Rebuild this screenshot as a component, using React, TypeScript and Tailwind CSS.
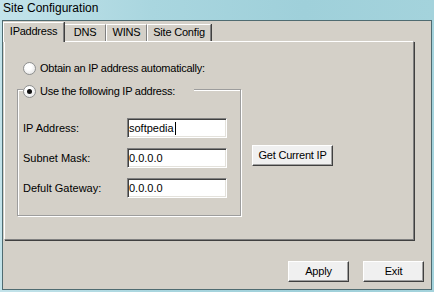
const face = "font-['Liberation_Sans',Arial,sans-serif]"

type Tab = { label: string; width: string; active?: boolean }

const tabs: Tab[] = [
  { label: "IPaddress", width: "w-[61px]", active: true },
  { label: "DNS", width: "w-[42px]" },
  { label: "WINS", width: "w-[41px]" },
  { label: "Site Config", width: "w-[64px]" },
]

function Radio({ checked }: { checked?: boolean }) {
  return (
    <span className="flex h-[13px] w-[13px] shrink-0 items-center justify-center rounded-full border border-[#8e8f8f] bg-[radial-gradient(circle_at_40%_35%,#ffffff_30%,#dcdcdc)]">
      {checked && <span className="h-[5px] w-[5px] rounded-full bg-[#111]" />}
    </span>
  )
}

function Button({ label, width }: { label: string; width: string }) {
  return (
    <button
      type="button"
      className={`${width} h-[21px] border border-t-white border-l-white border-r-[#404040] border-b-[#404040] bg-[#f0f0f0] text-[11px] leading-[13px] tracking-[-0.2px] text-black shadow-[inset_-1px_-1px_0_#a0a0a0]`}
    >
      {label}
    </button>
  )
}

function Field({ value, caret }: { value: string; caret?: boolean }) {
  return (
    <div className="flex h-[20px] w-[100px] items-center border border-t-[#808080] border-l-[#808080] border-r-white border-b-white bg-white pl-[1px] text-[11px] leading-[13px] text-black shadow-[inset_1px_1px_0_#404040,inset_-1px_-1px_0_#e4e2dc]">
      <span>{value}</span>
      {caret && <span className="ml-[1px] h-[13px] w-px bg-black" />}
    </div>
  )
}

export default function App() {
  const rows = [
    { label: "IP Address:", value: "softpedia", caret: true },
    { label: "Subnet Mask:", value: "0.0.0.0" },
    { label: "Defult Gateway:", value: "0.0.0.0" },
  ]

  return (
    <div className={`${face} h-[292px] w-[434px] overflow-hidden bg-[linear-gradient(90deg,#c3e3ea_0%,#a9d6df_35%,#9fd0da_70%,#a4d3dc_100%)] text-black`}>
      <div className="h-[20px] pl-[3px] text-[12px] leading-[16px] text-black">Site Configuration</div>

      <div className="mx-[2px] h-[270px] border border-[#4f6b71] bg-[#d4d0c8]">
        {/* tab strip */}
        <div className="mt-[1px] flex h-[19px] items-end">
          {tabs.map((tab) =>
            tab.active ? (
              <div
                key={tab.label}
                className={`${tab.width} relative z-10 -mb-px flex h-[20px] justify-center border-t border-l border-r border-t-white border-l-white border-r-[#808080] bg-[#d4d0c8] pt-[2px] text-[11px] leading-[13px] tracking-[-0.25px] shadow-[1px_0_0_#404040]`}
              >
                {tab.label}
              </div>
            ) : (
              <div
                key={tab.label}
                className={`${tab.width} flex h-[17px] justify-center border-t border-l border-r border-t-white border-l-white border-r-[#808080] pt-[1px] text-[11px] leading-[13px] tracking-[-0.2px] shadow-[1px_0_0_#404040]`}
              >
                {tab.label}
              </div>
            ),
          )}
        </div>

        {/* tab page */}
        <div className="ml-[1px] h-[199px] w-[410px] border border-t-white border-l-white border-r-[#808080] border-b-[#808080] shadow-[1px_1px_0_#404040]">
          <div className="pl-[12px] pt-[20px]">
            <div className="ml-[6px] flex h-[13px] items-center gap-[4px] text-[11px] leading-[13px] tracking-[-0.25px]">
              <Radio />
              <span>Obtain an IP address automatically:</span>
            </div>

            <div className="mt-[14px] flex items-start">
              <div className="h-[127px] w-[224px] border border-[#9d9d9d] shadow-[inset_1px_1px_0_#ffffff,1px_1px_0_#ffffff]">
                <div className="-mt-[5px] ml-[5px] flex h-[13px] w-fit items-center gap-[4px] bg-[#d4d0c8] pr-[19px] text-[11px] leading-[13px] tracking-[-0.25px]">
                  <Radio checked />
                  <span>Use the following IP address:</span>
                </div>

                <div className="ml-[5px] mt-[20px] grid grid-cols-[104px_100px] items-center gap-y-[10px] text-[11px] leading-[13px]">
                  {rows.map((row) => (
                    <div key={row.label} className="contents">
                      <span>{row.label}</span>
                      <Field value={row.value} caret={row.caret} />
                    </div>
                  ))}
                </div>
              </div>

              <div className="ml-[11px] mt-[53px]">
                <Button label="Get Current IP" width="w-[81px]" />
              </div>
            </div>
          </div>
        </div>

        {/* dialog buttons */}
        <div className="mt-[21px] flex justify-end gap-[14px] pr-[7px]">
          <Button label="Apply" width="w-[61px]" />
          <Button label="Exit" width="w-[61px]" />
        </div>
      </div>
    </div>
  )
}
